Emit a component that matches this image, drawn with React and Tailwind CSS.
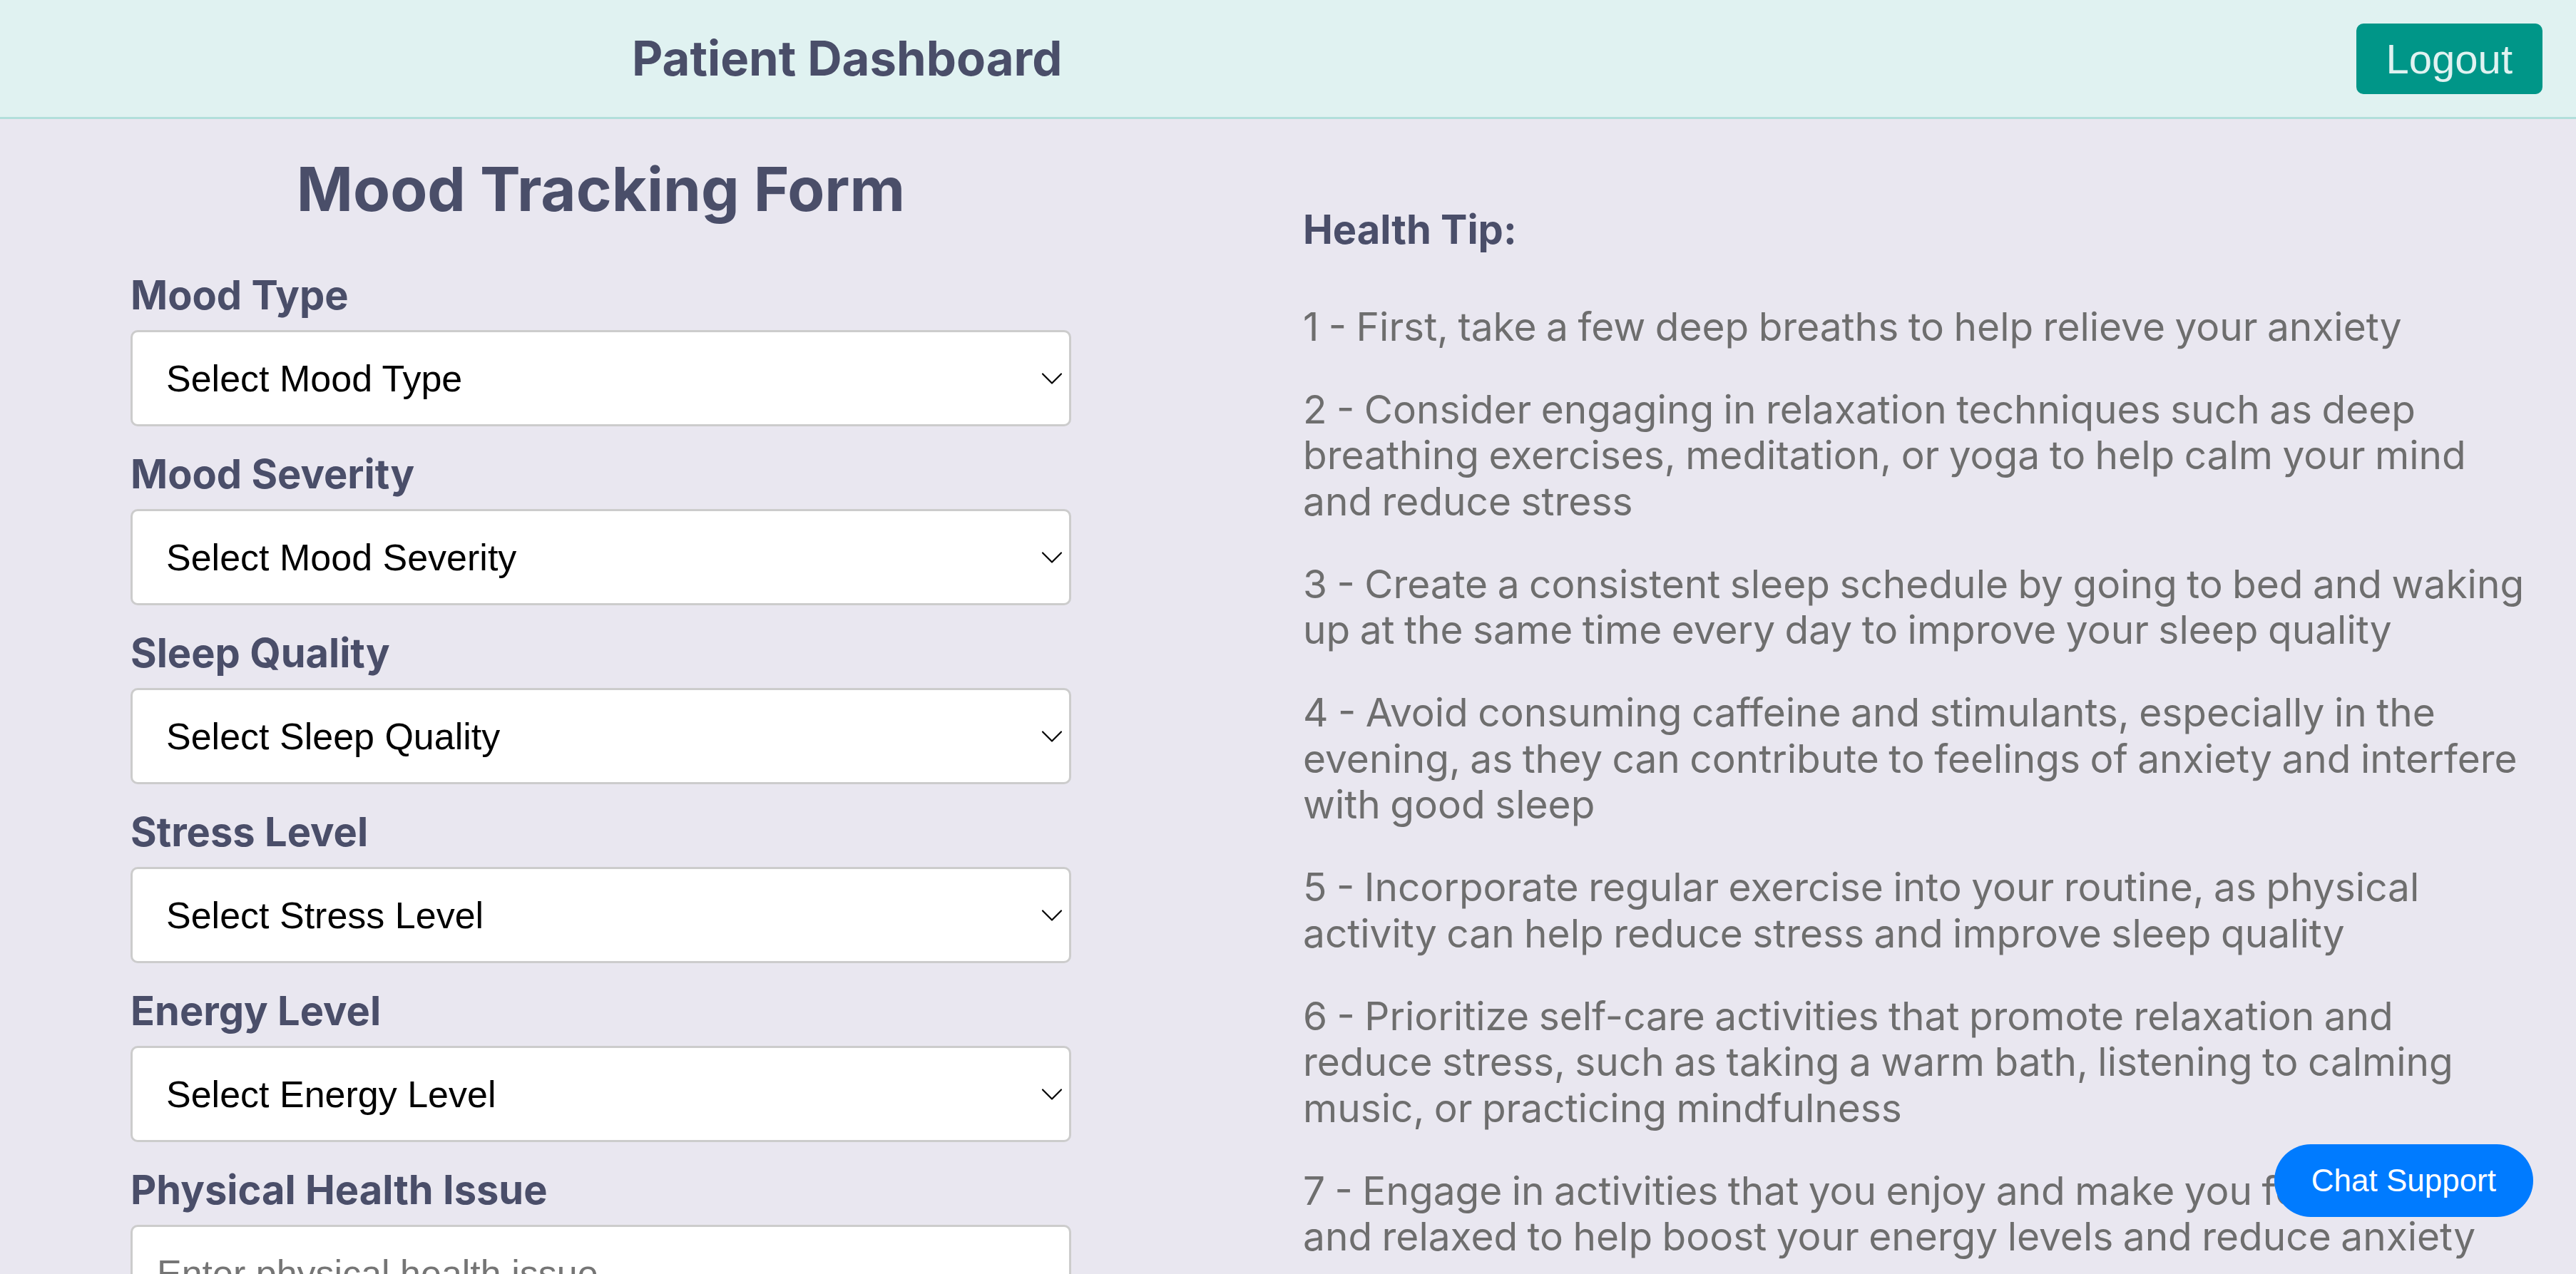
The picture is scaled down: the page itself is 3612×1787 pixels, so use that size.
import { ChevronDown } from "lucide-react"

const fields = [
  { label: "Mood Type", placeholder: "Select Mood Type" },
  { label: "Mood Severity", placeholder: "Select Mood Severity" },
  { label: "Sleep Quality", placeholder: "Select Sleep Quality" },
  { label: "Stress Level", placeholder: "Select Stress Level" },
  { label: "Energy Level", placeholder: "Select Energy Level" },
]

const tips = [
  "1 - First, take a few deep breaths to help relieve your anxiety",
  "2 - Consider engaging in relaxation techniques such as deep breathing exercises, meditation, or yoga to help calm your mind and reduce stress",
  "3 - Create a consistent sleep schedule by going to bed and waking up at the same time every day to improve your sleep quality",
  "4 - Avoid consuming caffeine and stimulants, especially in the evening, as they can contribute to feelings of anxiety and interfere with good sleep",
  "5 - Incorporate regular exercise into your routine, as physical activity can help reduce stress and improve sleep quality",
  "6 - Prioritize self-care activities that promote relaxation and reduce stress, such as taking a warm bath, listening to calming music, or practicing mindfulness",
  "7 - Engage in activities that you enjoy and make you feel happy and relaxed to help boost your energy levels and reduce anxiety",
]

// Label over a field
const Label = ({ children }) => (
  <label className="block text-[56px] leading-[64px] font-bold text-[#4a4e69] mb-[17px]">
    {children}
  </label>
)

const Select = ({ placeholder }) => (
  <div className="relative mb-[35px]">
    <select
      defaultValue=""
      className="appearance-none w-full h-[135px] pl-[47px] pr-[70px] bg-white border-[3px] border-[#cccccc] rounded-[10px] text-[52px] text-black font-['Liberation_Sans',Arial,sans-serif] focus:outline-none"
    >
      <option value="" disabled>{placeholder}</option>
    </select>
    <ChevronDown
      size={52}
      strokeWidth={1}
      className="absolute right-[1px] top-1/2 -translate-y-1/2 text-black pointer-events-none"
    />
  </div>
)

const Header = () => (
  <header className="flex items-center justify-between h-[167px] bg-[#e0f2f1] border-b-[3px] border-[#b2dfdb] pl-[886px] pr-[47px]">
    <h1 className="text-[67px] font-bold text-[#4a4e69]">Patient Dashboard</h1>
    <button className="h-[99px] px-[42px] rounded-[10px] bg-[#009688] text-[#e0f2f1] text-[58px] font-['Liberation_Sans',Arial,sans-serif]">
      Logout
    </button>
  </header>
)

const MoodForm = () => (
  <form className="w-[1319px] shrink-0 ml-[183px] pt-[48px]">
    <h2 className="text-[85px] leading-[102px] font-bold text-center text-[#4a4e69] mb-[65px]">
      Mood Tracking Form
    </h2>
    {fields.map((f) => (
      <div key={f.label}>
        <Label>{f.label}</Label>
        <Select placeholder={f.placeholder} />
      </div>
    ))}
    <Label>Physical Health Issue</Label>
    <input
      type="text"
      placeholder="Enter physical health issue"
      className="w-full h-[135px] px-[34px] bg-white border-[3px] border-[#cccccc] rounded-[10px] text-[52px] font-['Liberation_Sans',Arial,sans-serif] placeholder:text-[#757575] focus:outline-none"
    />
  </form>
)

const HealthTips = () => (
  <section className="w-[1717px] ml-[325px] pt-[123px]">
    <h3 className="text-[56px] leading-[64.5px] font-bold text-[#4a4e69] mb-[71px]">Health Tip:</h3>
    {tips.map((t) => (
      <p key={t} className="text-[55px] leading-[64.5px] [word-spacing:-2px] text-[#6e6e6e] mb-[51.5px]">
        {t}
      </p>
    ))}
  </section>
)

export default function App() {
  return (
    <div className="min-h-screen bg-[#e9e7f0] font-['Inter',sans-serif]">
      <Header />
      <main className="flex">
        <MoodForm />
        <HealthTips />
      </main>
      <button className="fixed bottom-[80px] right-[60px] h-[102px] px-[52px] rounded-full bg-[#007bff] text-white text-[44px] font-['Liberation_Sans',Arial,sans-serif]">
        Chat Support
      </button>
    </div>
  )
}
